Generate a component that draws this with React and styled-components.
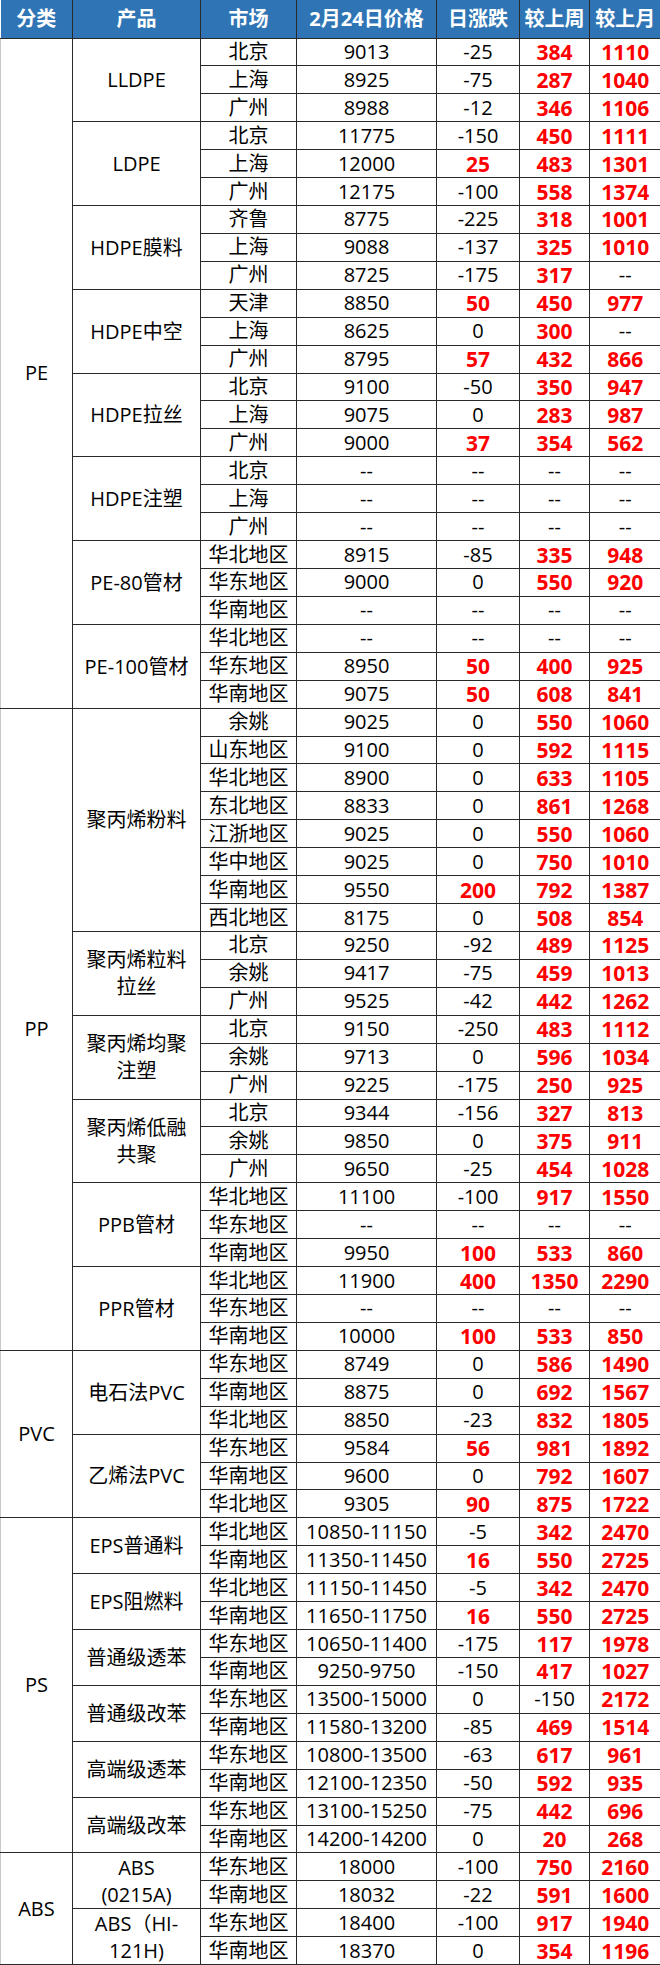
import React from "react";
import styled, { createGlobalStyle } from "styled-components";

const Global = createGlobalStyle`
  html, body { margin: 0; padding: 0; background: #ffffff; }
  body { font-family: "Open Sans", "Noto Sans CJK SC", sans-serif; }
`;

const Table = styled.table`
  width: 660px;
  table-layout: fixed;
  border-collapse: collapse;
  font-family: "Open Sans", "Noto Sans CJK SC", sans-serif;
  font-size: 20px;
  line-height: 24px;
  color: #000;
`;

const HeadRow = styled.tr`
  height: 38px;
  background: #2f75b5;
`;

const HeadCell = styled.th`
  padding: 0;
  color: #ffffff;
  font-weight: 700;
  font-size: 20px;
  text-align: center;
  vertical-align: middle;
  border: 1px solid #2a2a2a;
  border-top: none;
  &:first-child { border-left: none; }
  &:last-child { border-right: none; }
`;

const Row = styled.tr`
  height: 27.93px;
`;

const Cell = styled.td`
  padding: 0;
  text-align: center;
  vertical-align: middle;
  white-space: nowrap;
  border: 1px solid #2a2a2a;
  color: ${(p) => (p.$up ? "#ff0000" : "#000000")};
  font-weight: ${(p) => (p.$up ? 700 : 400)};
  font-size: ${(p) => (p.$up ? "21px" : "20px")};
  &:last-child { border-right: none; }
`;

const CategoryCell = styled(Cell)`
  border-left: 1px solid #c9c9c9;
`;

const ProductCell = styled(Cell)`
  white-space: pre-line;
  line-height: 27px;
`;

const cols = [72, 128, 96, 140, 83, 70, 71];
const heads = ["分类", "产品", "市场", "2月24日价格", "日涨跌", "较上周", "较上月"];

const D = "--";
const data = [
  {
    cat: "PE",
    groups: [
      { name: "LLDPE", rows: [["北京", "9013", "-25", "384", "1110"], ["上海", "8925", "-75", "287", "1040"], ["广州", "8988", "-12", "346", "1106"]] },
      { name: "LDPE", rows: [["北京", "11775", "-150", "450", "1111"], ["上海", "12000", "25", "483", "1301"], ["广州", "12175", "-100", "558", "1374"]] },
      { name: "HDPE膜料", rows: [["齐鲁", "8775", "-225", "318", "1001"], ["上海", "9088", "-137", "325", "1010"], ["广州", "8725", "-175", "317", D]] },
      { name: "HDPE中空", rows: [["天津", "8850", "50", "450", "977"], ["上海", "8625", "0", "300", D], ["广州", "8795", "57", "432", "866"]] },
      { name: "HDPE拉丝", rows: [["北京", "9100", "-50", "350", "947"], ["上海", "9075", "0", "283", "987"], ["广州", "9000", "37", "354", "562"]] },
      { name: "HDPE注塑", rows: [["北京", D, D, D, D], ["上海", D, D, D, D], ["广州", D, D, D, D]] },
      { name: "PE-80管材", rows: [["华北地区", "8915", "-85", "335", "948"], ["华东地区", "9000", "0", "550", "920"], ["华南地区", D, D, D, D]] },
      { name: "PE-100管材", rows: [["华北地区", D, D, D, D], ["华东地区", "8950", "50", "400", "925"], ["华南地区", "9075", "50", "608", "841"]] },
    ],
  },
  {
    cat: "PP",
    groups: [
      {
        name: "聚丙烯粉料",
        rows: [
          ["余姚", "9025", "0", "550", "1060"],
          ["山东地区", "9100", "0", "592", "1115"],
          ["华北地区", "8900", "0", "633", "1105"],
          ["东北地区", "8833", "0", "861", "1268"],
          ["江浙地区", "9025", "0", "550", "1060"],
          ["华中地区", "9025", "0", "750", "1010"],
          ["华南地区", "9550", "200", "792", "1387"],
          ["西北地区", "8175", "0", "508", "854"],
        ],
      },
      { name: "聚丙烯粒料\n拉丝", rows: [["北京", "9250", "-92", "489", "1125"], ["余姚", "9417", "-75", "459", "1013"], ["广州", "9525", "-42", "442", "1262"]] },
      { name: "聚丙烯均聚\n注塑", rows: [["北京", "9150", "-250", "483", "1112"], ["余姚", "9713", "0", "596", "1034"], ["广州", "9225", "-175", "250", "925"]] },
      { name: "聚丙烯低融\n共聚", rows: [["北京", "9344", "-156", "327", "813"], ["余姚", "9850", "0", "375", "911"], ["广州", "9650", "-25", "454", "1028"]] },
      { name: "PPB管材", rows: [["华北地区", "11100", "-100", "917", "1550"], ["华东地区", D, D, D, D], ["华南地区", "9950", "100", "533", "860"]] },
      { name: "PPR管材", rows: [["华北地区", "11900", "400", "1350", "2290"], ["华东地区", D, D, D, D], ["华南地区", "10000", "100", "533", "850"]] },
    ],
  },
  {
    cat: "PVC",
    groups: [
      { name: "电石法PVC", rows: [["华东地区", "8749", "0", "586", "1490"], ["华南地区", "8875", "0", "692", "1567"], ["华北地区", "8850", "-23", "832", "1805"]] },
      { name: "乙烯法PVC", rows: [["华东地区", "9584", "56", "981", "1892"], ["华南地区", "9600", "0", "792", "1607"], ["华北地区", "9305", "90", "875", "1722"]] },
    ],
  },
  {
    cat: "PS",
    groups: [
      { name: "EPS普通料", rows: [["华北地区", "10850-11150", "-5", "342", "2470"], ["华南地区", "11350-11450", "16", "550", "2725"]] },
      { name: "EPS阻燃料", rows: [["华北地区", "11150-11450", "-5", "342", "2470"], ["华南地区", "11650-11750", "16", "550", "2725"]] },
      { name: "普通级透苯", rows: [["华东地区", "10650-11400", "-175", "117", "1978"], ["华南地区", "9250-9750", "-150", "417", "1027"]] },
      { name: "普通级改苯", rows: [["华东地区", "13500-15000", "0", "-150", "2172"], ["华南地区", "11580-13200", "-85", "469", "1514"]] },
      { name: "高端级透苯", rows: [["华东地区", "10800-13500", "-63", "617", "961"], ["华南地区", "12100-12350", "-50", "592", "935"]] },
      { name: "高端级改苯", rows: [["华东地区", "13100-15250", "-75", "442", "696"], ["华南地区", "14200-14200", "0", "20", "268"]] },
    ],
  },
  {
    cat: "ABS",
    groups: [
      { name: "ABS\n(0215A)", rows: [["华东地区", "18000", "-100", "750", "2160"], ["华南地区", "18032", "-22", "591", "1600"]] },
      { name: "ABS（HI-\n121H)", rows: [["华东地区", "18400", "-100", "917", "1940"], ["华南地区", "18370", "0", "354", "1196"]] },
    ],
  },
];

const isUp = (v) => /^\d+$/.test(v) && Number(v) > 0;

export default function App() {
  const body = [];
  data.forEach((c) => {
    const total = c.groups.reduce((s, g) => s + g.rows.length, 0);
    c.groups.forEach((g, gi) => {
      g.rows.forEach((r, ri) => {
        const [market, price, day, week, month] = r;
        body.push(
          <Row key={`${c.cat}-${gi}-${ri}`}>
            {gi === 0 && ri === 0 && <CategoryCell rowSpan={total}>{c.cat}</CategoryCell>}
            {ri === 0 && <ProductCell rowSpan={g.rows.length}>{g.name}</ProductCell>}
            <Cell>{market}</Cell>
            <Cell>{price}</Cell>
            <Cell $up={isUp(day)}>{day}</Cell>
            <Cell $up={isUp(week)}>{week}</Cell>
            <Cell $up={isUp(month)}>{month}</Cell>
          </Row>
        );
      });
    });
  });

  return (
    <>
      <Global />
      <Table>
        <colgroup>
          {cols.map((w, i) => (
            <col key={i} style={{ width: w }} />
          ))}
        </colgroup>
        <thead>
          <HeadRow>
            {heads.map((h) => (
              <HeadCell key={h}>{h}</HeadCell>
            ))}
          </HeadRow>
        </thead>
        <tbody>{body}</tbody>
      </Table>
    </>
  );
}
